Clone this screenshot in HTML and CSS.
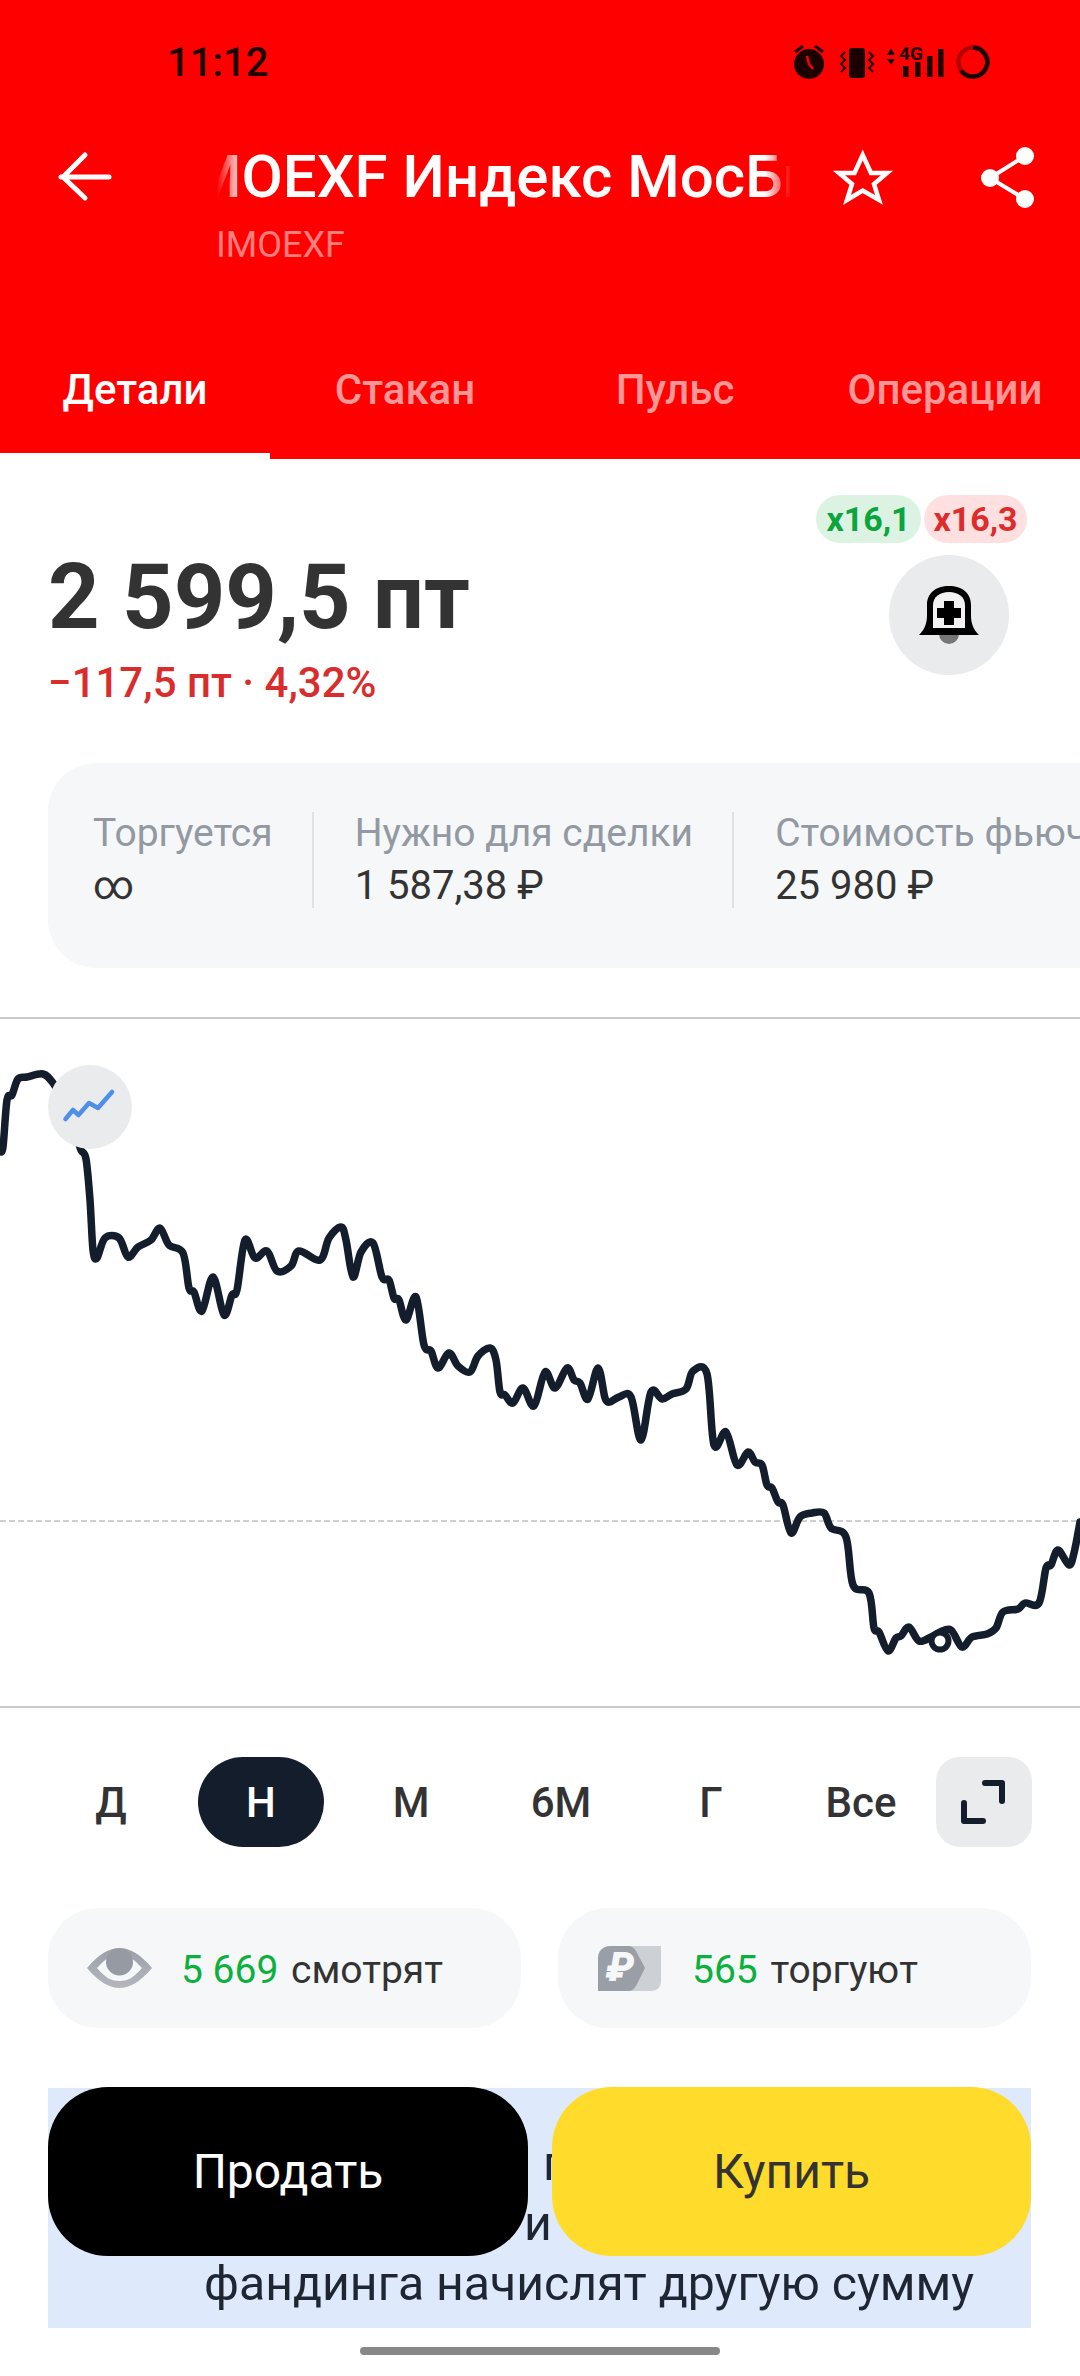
FILE: index.html
```html
<!DOCTYPE html>
<html lang="ru">
<head>
    <meta charset="UTF-8">
    <meta name="viewport" content="width=device-width, initial-scale=1.0">
    <title>IMOEXF Индекс МосБиржи</title>
    <link rel="stylesheet" href="styles.css">
</head>
<body>
<div class="phone">
    <header class="header">
        <div class="status">
            <span class="status-time">11:12</span>
            <svg class="status-icons" width="240" height="80" viewBox="0 0 240 80">
                <circle cx="49" cy="42" r="15" fill="#1c0000"/>
                <path d="M35 30l8-6M63 30l-8-6" stroke="#1c0000" stroke-width="3" fill="none"/>
                <path d="M47 34l2 8 4 5" stroke="#f00" stroke-width="2.5" fill="none"/>
                <rect x="89" y="26" width="16" height="30" rx="3" fill="#1c0000"/>
                <path d="M85 30l-4 4 4 4-4 4 4 4-4 4M109 30l4 4-4 4 4 4-4 4 4 4" stroke="#1c0000" stroke-width="2" fill="none"/>
                <path d="M127 33l4-7 4 7zM127 37h8l-4 6z" fill="#1c0000"/>
                <text class="status-net" x="139" y="38">4G</text>
                <rect x="143" y="44" width="5.5" height="11" fill="#1c0000"/>
                <rect x="155" y="40" width="5.5" height="15" fill="#1c0000"/>
                <rect x="167" y="34" width="5.5" height="21" fill="#1c0000"/>
                <rect x="178" y="27" width="5.5" height="28" fill="#1c0000"/>
                <circle cx="213" cy="40" r="14.5" stroke="#b40000" stroke-width="4.5" fill="none"/>
                <path d="M213 25.5a14.5 14.5 0 1 1-12 23" stroke="#1c0000" stroke-width="4.5" fill="none"/>
            </svg>
        </div>
        <div class="toolbar">
            <svg class="back" width="60" height="60" viewBox="0 0 60 60">
                <path d="M4 30H52M28 8L6 30l22 21" stroke="#fff" stroke-width="5" stroke-linecap="round" stroke-linejoin="round" fill="none"/>
            </svg>
            <div class="titles">
                <div class="title"><span class="title-text">IMOEXF Индекс МосБиржи</span></div>
                <div class="subtitle">IMOEXF</div>
            </div>
            <svg class="star" width="90" height="90" viewBox="0 0 90 90">
                <polygon points="43.7,25 52,43 68,43 55,54 60,70 43.7,60.500 28,70 33,54 20,43 35.500,43" stroke="#fff" stroke-width="4.500" fill="none"/>
            </svg>
            <svg class="share" width="60" height="70" viewBox="0 0 60 70">
                <path d="M45 11L10 33l35 21" stroke="#fff" stroke-width="4" fill="none"/>
                <circle cx="45" cy="11" r="9" fill="#fff"/>
                <circle cx="10" cy="33" r="9" fill="#fff"/>
                <circle cx="45" cy="54" r="9" fill="#fff"/>
            </svg>
        </div>
        <nav class="tabs">
            <div class="tab tab-active">Детали</div>
            <div class="tab">Стакан</div>
            <div class="tab">Пульс</div>
            <div class="tab">Операции</div>
        </nav>
    </header>

    <section class="quote">
        <div>
            <div class="price">2 599,5 пт</div>
            <div class="change">−117,5 пт · 4,32%</div>
        </div>
        <div class="quote-side">
            <div class="pills">
                <span class="pill pill-long">x16,1</span>
                <span class="pill pill-short">x16,3</span>
            </div>
            <div class="bell">
                <svg width="120" height="120" viewBox="0 0 120 120">
                    <circle cx="60" cy="79" r="10" fill="#777"/>
                    <path d="M30 80C36 74 38 68 38 60V50C38 38 47 31 60 31C73 31 82 38 82 50V60C82 68 84 74 90 80Z" fill="#000"/>
                    <path d="M44 73V50C44 42 51 37 60 37C69 37 76 42 76 50V73Z" fill="#f1f1f1"/>
                    <path d="M60 46V70M48 58H72" stroke="#000" stroke-width="10" fill="none"/>
                </svg>
            </div>
        </div>
    </section>

    <div class="info-card">
        <div class="info-item">
            <div class="info-label">Торгуется</div>
            <div class="info-value">∞</div>
        </div>
        <div class="info-item">
            <div class="info-label">Нужно для сделки</div>
            <div class="info-value">1 587,38 ₽</div>
        </div>
        <div class="info-item">
            <div class="info-label">Стоимость фьючерса</div>
            <div class="info-value">25 980 ₽</div>
        </div>
    </div>

    <section class="chart">
        <svg class="chart-svg" width="1080" height="687" viewBox="0 1019 1080 687">
            <line class="chart-avg" x1="0" y1="1521" x2="1080" y2="1521"/>
            <path id="chart-line" class="chart-line"/>
            <circle class="chart-dot" cx="940" cy="1641" r="8.500"/>
        </svg>
        <div class="chart-type">
            <svg width="84" height="84" viewBox="48 1065 84 84">
                <path d="M65.500 1119L73 1110l5.500 5L89 1103l9 5 14-16" stroke="#4f8fe8" stroke-width="4.500" stroke-linecap="round" stroke-linejoin="round" fill="none"/>
            </svg>
        </div>
    </section>

    <div class="ranges">
        <div class="range">Д</div>
        <div class="range range-active">Н</div>
        <div class="range">М</div>
        <div class="range">6М</div>
        <div class="range">Г</div>
        <div class="range">Все</div>
        <div class="expand">
            <svg width="96" height="90" viewBox="0 0 96 90">
                <path d="M49 26H66V44M28 46V64H47" stroke="#141d2b" stroke-width="6" stroke-linecap="round" stroke-linejoin="round" fill="none"/>
            </svg>
        </div>
    </div>

    <div class="stats">
        <div class="stat">
            <svg class="stat-eye" width="65" height="40" viewBox="0 0 65 40">
                <defs>
                    <linearGradient id="eye-grad" x1="0" y1="0" x2="0" y2="1">
                        <stop offset="0" stop-color="#9aa0a8"/>
                        <stop offset="1" stop-color="#b4b8bd"/>
                    </linearGradient>
                </defs>
                <path d="M0 20C12 6 22 0 32.500 0C43 0 53 6 65 20C53 34 43 40 32.500 40C22 40 12 34 0 20Z" fill="url(#eye-grad)"/>
                <path d="M10 20C18 12 20 8 32.500 8C45 8 47 12 55 20C47 29 42 33 32.500 33C23 33 18 29 10 20Z" fill="#f5f7f8"/>
                <circle cx="32.500" cy="14" r="13.500" fill="#959aa3"/>
            </svg>
            <span class="stat-text"><span class="stat-num">5 669</span> смотрят</span>
        </div>
        <div class="stat">
            <svg class="stat-tag" width="63" height="45" viewBox="0 0 63 45">
                <path d="M28 0H63V35C63 41 59 45 53 45H28Z" fill="#cdd0d5"/>
                <path d="M12 0H30C34 0 36 2 38 5L47 22L38 40C36 43 34 45 30 45H0V12C0 5 5 0 12 0Z" fill="#9a9ea7"/>
                <text class="stat-tag-sign" x="22" y="35">₽</text>
            </svg>
            <span class="stat-text"><span class="stat-num">565</span> торгуют</span>
        </div>
    </div>

    <div class="banner">
        <div class="banner-frag banner-frag-1">п</div>
        <div class="banner-frag banner-frag-2">и</div>
        <div class="banner-line">фандинга начислят другую сумму</div>
    </div>

    <div class="actions">
        <div class="action action-sell">Продать</div>
        <div class="action action-buy">Купить</div>
    </div>

    <div class="home-bar"></div>
</div>
<script src="chart.js"></script>
</body>
</html>
```

FILE: styles.css
```css
* {
    box-sizing: border-box;
}
html, body {
    margin: 0;
    padding: 0;
}
body {
    background: #fff;
    font-family: Roboto, "Liberation Sans", sans-serif;
    color: #333;
}
.phone {
    position: relative;
    width: 1080px;
    height: 2376px;
    overflow: hidden;
    background: #fff;
}

/* header */
.header {
    display: flex;
    flex-direction: column;
    height: 459px;
    background: #f00;
    color: #fff;
}
.status {
    display: flex;
    justify-content: space-between;
    align-items: center;
    height: 124px;
    padding-left: 167px;
    padding-right: 80px;
}
.status-time {
    font-size: 40px;
    font-weight: 500;
    color: #1c0000;
}
.status-net {
    font-family: Roboto, sans-serif;
    font-size: 19px;
    font-weight: 700;
    fill: #1c0000;
}
.toolbar {
    position: relative;
    display: flex;
    padding-top: 21px;
}
.back {
    margin: 2px 0 0 57px;
}
.titles {
    width: 574px;
    margin-left: 100px;
}
.title {
    overflow: hidden;
    white-space: nowrap;
    font-size: 60px;
    font-weight: 500;
    line-height: 64px;
    text-indent: -45px;
    -webkit-mask-image: linear-gradient(90deg, transparent, #000 26px, #000 calc(100% - 26px), transparent);
    mask-image: linear-gradient(90deg, transparent, #000 26px, #000 calc(100% - 26px), transparent);
}
.subtitle {
    margin-top: 16px;
    margin-left: -1px;
    font-size: 36px;
    line-height: 40px;
    color: rgba(255, 255, 255, 0.5);
}
.star {
    margin-left: 28px;
    margin-top: -15px;
}
.share {
    margin-left: 71px;
}
.tabs {
    display: grid;
    grid-template-columns: repeat(4, 270px);
    margin-top: auto;
}
.tab {
    height: 120px;
    padding-top: 27px;
    text-align: center;
    font-size: 42px;
    font-weight: 500;
    line-height: 48px;
    color: rgba(255, 255, 255, 0.6);
}
.tab-active {
    border-bottom: 6px solid #fff;
    color: #fff;
}

/* price */
.quote {
    display: flex;
    justify-content: space-between;
    height: 304px;
    padding: 36px 53px 0 48px;
}
.price {
    margin-top: 53px;
    font-size: 90px;
    font-weight: 700;
    line-height: 100px;
}
.change {
    margin-top: 11px;
    font-size: 42px;
    font-weight: 500;
    line-height: 48px;
    color: #d92d2d;
}
.quote-side {
    display: flex;
    flex-direction: column;
    align-items: flex-end;
}
.pills {
    display: flex;
    gap: 3px;
}
.pill {
    width: 105px;
    height: 48px;
    border-radius: 24px;
    text-align: center;
    font-size: 34px;
    font-weight: 700;
    line-height: 48px;
}
.pill-long {
    background: #dcf3e3;
    color: #0aa53c;
}
.pill-short {
    width: 103px;
    background: #ffe0e0;
    color: #dd2c2c;
}
.bell {
    width: 120px;
    height: 120px;
    margin: 12px 18px 0 0;
    border-radius: 50%;
    background: #e9ebed;
}
.bell svg {
    display: block;
}

/* info card, runs off the right edge */
.info-card {
    display: flex;
    width: max-content;
    height: 205px;
    margin-left: 48px;
    padding: 49px 0 0 45px;
    border-radius: 48px;
    background: #f5f7f8;
}
.info-item {
    height: 96px;
    padding-right: 39px;
    margin-right: 41px;
    border-right: 2px solid #dfe2e5;
}
.info-item:last-child {
    border-right: 0;
}
.info-label {
    margin-top: 1px;
    font-size: 39px;
    line-height: 40px;
    color: #9299a2;
}
.info-value {
    margin-top: 7px;
    font-size: 40px;
    line-height: 52px;
}

/* chart */
.chart {
    position: relative;
    margin-top: 49px;
    height: 691px;
    border-top: 2px solid #c9c9c9;
    border-bottom: 2px solid #c9c9c9;
}
.chart-svg {
    display: block;
}
.chart-line {
    fill: none;
    stroke: #141d2b;
    stroke-width: 7.5;
    stroke-linejoin: round;
    stroke-linecap: round;
}
.chart-avg {
    stroke: #d0d0d0;
    stroke-width: 2;
    stroke-dasharray: 6 3;
}
.chart-dot {
    fill: #fff;
    stroke: #141d2b;
    stroke-width: 6;
}
.chart-type {
    position: absolute;
    top: 46px;
    left: 48px;
    width: 84px;
    height: 84px;
    border-radius: 50%;
    background: #e9ebed;
}
.chart-type svg {
    display: block;
}

/* period switch */
.ranges {
    display: grid;
    grid-template-columns: repeat(6, 150px) 96px;
    height: 90px;
    margin: 49px 0 0 36px;
}
.range {
    height: 90px;
    margin: 0 12px;
    padding-top: 2px;
    border-radius: 45px;
    text-align: center;
    font-size: 42px;
    font-weight: 500;
    line-height: 88px;
}
.range-active {
    background: #141d2b;
    color: #fff;
}
.expand {
    height: 90px;
    border-radius: 24px;
    background: #e9ebed;
}
.expand svg {
    display: block;
}

/* watchers */
.stats {
    display: flex;
    gap: 37px;
    margin: 61px 49px 0 48px;
}
.stat {
    display: flex;
    align-items: center;
    flex: 1;
    height: 120px;
    border-radius: 50px;
    background: #f5f7f8;
    font-size: 39px;
}
.stat-text {
    padding-top: 3px;
}
.stat-num {
    margin-right: 3px;
    color: #0bb03d;
}
.stat-eye {
    margin: 0 29px 0 39px;
}
.stat-tag {
    margin: 0 31px 0 40px;
}
.stat-tag-sign {
    font-size: 40px;
    font-weight: 900;
    font-style: italic;
    text-anchor: middle;
    fill: #f5f7f8;
}

/* funding note under the buttons */
.banner {
    height: 240px;
    margin: 60px 49px 0 48px;
    padding-top: 46px;
    background: #deeafb;
    font-size: 48.2px;
    line-height: 60px;
    color: #1e2633;
    white-space: nowrap;
}
.banner-frag-1 {
    padding-left: 495px;
}
.banner-frag-2 {
    padding-left: 476px;
}
.banner-line {
    padding-left: 156px;
}
.actions {
    position: absolute;
    top: 2087px;
    left: 48px;
    display: flex;
    gap: 24px;
}
.action {
    width: 480px;
    height: 169px;
    border-radius: 60px;
    text-align: center;
    font-size: 48px;
    line-height: 169px;
}
.action-sell {
    background: #000;
    color: #fff;
}
.action-buy {
    width: 479px;
    background: #ffdb2b;
}
.home-bar {
    width: 360px;
    height: 8px;
    margin: 19px auto 0;
    border-radius: 4px;
    background: #888;
}
```

FILE: chart.js
```js
// price points, x and y are page pixels
var points = [
    [0,1151],[3,1147],[7,1100],[12,1095],[18,1079],[27,1077],[43,1074],[53,1083],[66,1105],[76,1135],
    [81,1150],[86,1159],[90,1200],[93,1250],[97,1258],[105,1238],[119,1238],[128,1257],[138,1247],[151,1240],
    [160,1228],[169,1245],[183,1253],[189,1288],[194,1292],[202,1311],[213,1277],[224,1315],[232,1295],[237,1290],
    [245,1240],[255,1258],[267,1251],[277,1271],[291,1266],[299,1251],[320,1260],[329,1238],[341,1227],[346,1240],
    [353,1277],[361,1252],[373,1243],[382,1277],[389,1280],[394,1298],[399,1300],[406,1320],[416,1297],[424,1345],
    [431,1351],[438,1368],[449,1353],[458,1366],[470,1372],[478,1356],[490,1348],[496,1360],[500,1392],[505,1395],
    [513,1403],[523,1388],[534,1406],[545,1372],[555,1388],[567,1368],[574,1380],[580,1383],[588,1399],[598,1368],
    [605,1398],[610,1402],[619,1397],[631,1397],[641,1440],[651,1392],[662,1399],[672,1394],[686,1389],[693,1371],
    [707,1374],[714,1445],[726,1432],[737,1465],[748,1452],[755,1462],[762,1465],[767,1485],[772,1488],[778,1502],
    [783,1505],[791,1533],[800,1517],[812,1513],[824,1513],[831,1528],[846,1537],[853,1585],[869,1593],[874,1628],
    [879,1632],[888,1651],[896,1638],[901,1636],[909,1627],[919,1641],[931,1637],[940,1632],[951,1630],[962,1647],
    [972,1637],[987,1634],[996,1628],[1003,1612],[1018,1609],[1025,1603],[1039,1603],[1046,1568],[1051,1565],[1058,1550],
    [1069,1565],[1074,1553],[1080,1522]
];

// catmull-rom through the points so the line stays smooth
function smoothPath(pts) {
    var d = 'M' + pts[0][0] + ' ' + pts[0][1];
    for (var i = 0; i < pts.length - 1; i++) {
        var p0 = pts[Math.max(i - 1, 0)];
        var p1 = pts[i];
        var p2 = pts[i + 1];
        var p3 = pts[Math.min(i + 2, pts.length - 1)];
        var c1x = p1[0] + (p2[0] - p0[0]) / 6;
        var c1y = p1[1] + (p2[1] - p0[1]) / 6;
        var c2x = p2[0] - (p3[0] - p1[0]) / 6;
        var c2y = p2[1] - (p3[1] - p1[1]) / 6;
        d += 'C' + c1x + ' ' + c1y + ' ' + c2x + ' ' + c2y + ' ' + p2[0] + ' ' + p2[1];
    }
    return d;
}

document.getElementById('chart-line').setAttribute('d', smoothPath(points));
```
